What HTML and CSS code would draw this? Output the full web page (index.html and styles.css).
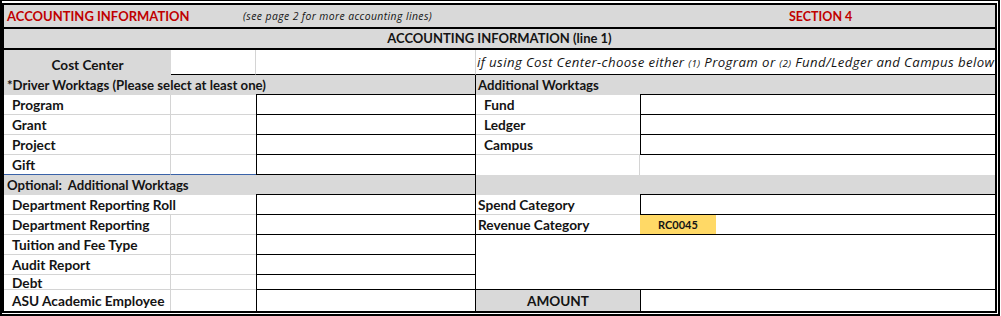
FILE: index.html
```html
<!DOCTYPE html>
<html>
<head>
<meta charset="utf-8">
<link rel="stylesheet" href="styles.css">
</head>
<body>
<div class="frame">
  <div class="sheet">
    <div class="title-row">
      <span class="title">ACCOUNTING INFORMATION</span>
      <span class="note">(see page 2 for more accounting lines)</span>
      <span class="section">SECTION 4</span>
    </div>
    <div class="subtitle">ACCOUNTING INFORMATION (line 1)</div>

    <div class="cell gray center bold cc">Cost Center</div>
    <div class="cell light-r bot-black"></div>
    <div class="cell light-r bot-black"></div>
    <div class="cell hint bot-black span3"><span>if using Cost Center-choose either <small>(1)</small> Program or <small>(2)</small> Fund/Ledger and Campus below</span></div>

    <div class="cell gray bold head span3 rb pl3">*Driver Worktags (Please select at least one)</div>
    <div class="cell gray bold head span3 pl2">Additional Worktags</div>

    <div class="cell lbl grid-rb">Program</div>
    <div class="cell grid-b"></div>
    <div class="cell box top"></div>
    <div class="cell lbl indent grid-b">Fund</div>
    <div class="cell box span2 top"></div>

    <div class="cell lbl grid-rb">Grant</div>
    <div class="cell grid-b"></div>
    <div class="cell box"></div>
    <div class="cell lbl indent grid-b">Ledger</div>
    <div class="cell box span2"></div>

    <div class="cell lbl grid-rb">Project</div>
    <div class="cell grid-b"></div>
    <div class="cell box"></div>
    <div class="cell lbl indent grid-b">Campus</div>
    <div class="cell box span2"></div>

    <div class="cell lbl grid-r blue-b">Gift</div>
    <div class="cell blue-b"></div>
    <div class="cell box"></div>
    <div class="cell light-r"></div>
    <div class="cell span2"></div>

    <div class="cell gray bold head span3 rb pl3">Optional:&nbsp; Additional Worktags</div>
    <div class="cell gray span3"></div>

    <div class="cell lbl span2 grid-b">Department Reporting Roll</div>
    <div class="cell box top"></div>
    <div class="cell lbl pl2 grid-b">Spend Category</div>
    <div class="cell box span2 top"></div>

    <div class="cell lbl grid-rb">Department Reporting</div>
    <div class="cell grid-b"></div>
    <div class="cell box"></div>
    <div class="cell lbl pl2 bot-black">Revenue Category</div>
    <div class="cell code bot-black">RC0045</div>
    <div class="cell bot-black"></div>

    <div class="cell lbl grid-rb">Tuition and Fee Type</div>
    <div class="cell grid-b"></div>
    <div class="cell box"></div>
    <div class="cell blank span3"></div>

    <div class="cell lbl grid-rb">Audit Report</div>
    <div class="cell grid-b"></div>
    <div class="cell box"></div>

    <div class="cell lbl grid-rb">Debt</div>
    <div class="cell grid-b"></div>
    <div class="cell box"></div>

    <div class="cell lbl grid-r">ASU Academic Employee</div>
    <div class="cell"></div>
    <div class="cell box last"></div>
    <div class="cell gray bold center amount">AMOUNT</div>
    <div class="cell span2 lb"></div>
  </div>
</div>
</body>
</html>
```

FILE: styles.css
```css
* { box-sizing: border-box; }
html, body { margin: 0; padding: 0; background: #fff; }
body {
  font-family: Lato, "Liberation Sans", sans-serif;
  color: #141414;
  width: 1001px;
  height: 316px;
  overflow: hidden;
}
.frame {
  width: 1000px;
  height: 316px;
  border: 2px solid #000;
  border-top-width: 1px;
  padding: 2px 1px 1px 0;
}
.sheet {
  height: 100%;
  border: 2px solid #000;
  display: grid;
  grid-template-columns: 167px 85px 220px 164px 76px 1fr;
  grid-template-rows: 24px 21px 25px 20px 20px 20px 20px 20px 20px 20px 20px 20px 20px 15px 1fr;
  background: #fff;
  overflow: hidden;
}
.title-row {
  grid-column: 1 / -1;
  background: #d9d9d9;
  border-bottom: 2px solid #000;
  display: flex;
  align-items: flex-end;
  padding-bottom: 3px;
}
.title {
  width: 239px;
  padding-left: 3px;
  color: #c00000;
  font-weight: 700;
  font-size: 13px;
}
.note {
  width: 546px;
  font-family: "Open Sans", Lato, sans-serif;
  font-style: italic;
  font-size: 10.4px;
  letter-spacing: 0.4px;
  padding-bottom: 1px;
}
.section {
  color: #c00000;
  font-weight: 700;
  font-size: 12.5px;
}
.subtitle {
  grid-column: 1 / -1;
  background: #d9d9d9;
  border-bottom: 2px solid #000;
  font-weight: 700;
  font-size: 13px;
  text-align: center;
  line-height: 18px;
}
.cell {
  font-size: 13px;
  white-space: nowrap;
  overflow: hidden;
  display: flex;
  align-items: center;
  min-width: 0;
}
.gray { background: #d9d9d9; }
.bold { font-weight: 700; }
.center { justify-content: center; }
.head { font-size: 13.2px; }
.cc { align-items: flex-end; padding-bottom: 2px; font-size: 13.6px; }
.amount { font-size: 13.6px; }
.span2 { grid-column: span 2; }
.span3 { grid-column: span 3; }
.blank { grid-row: span 3; border-bottom: 1px solid #000; }
.pl3 { padding-left: 3px; }
.pl2 { padding-left: 2px; }
.lbl { font-weight: 700; padding-left: 8px; font-size: 13.7px; }
.lbl.pl2 { padding-left: 2px; }
.indent { padding-left: 8px; }
.rb { border-right: 1px solid #000; }
.lb { border-left: 1px solid #000; }
.light-r { border-right: 1px solid #d4d4d4; }
.grid-r { border-right: 1px solid #d4d4d4; }
.grid-b { border-bottom: 1px solid #d4d4d4; }
.grid-rb { border-right: 1px solid #d4d4d4; border-bottom: 1px solid #d4d4d4; }
.blue-b { border-bottom: 1px solid #3a62a8; }
.bot-black { border-bottom: 1px solid #000; }
.box {
  border-left: 1px solid #000;
  border-right: 1px solid #000;
  border-bottom: 1px solid #000;
}
.box.top { border-top: 1px solid #000; margin-top: -1px; }
.box.last { border-bottom: 0; }
.span2.box { border-right: 0; }
.hint {
  font-family: "Open Sans", Lato, sans-serif;
  font-style: italic;
  font-size: 13.2px;
  letter-spacing: 0.4px;
  padding-left: 1px;
  overflow: visible;
}
.hint small { font-size: 9.8px; }
.code {
  background: #ffd966;
  font-weight: 700;
  font-size: 11px;
  justify-content: center;
}
```
